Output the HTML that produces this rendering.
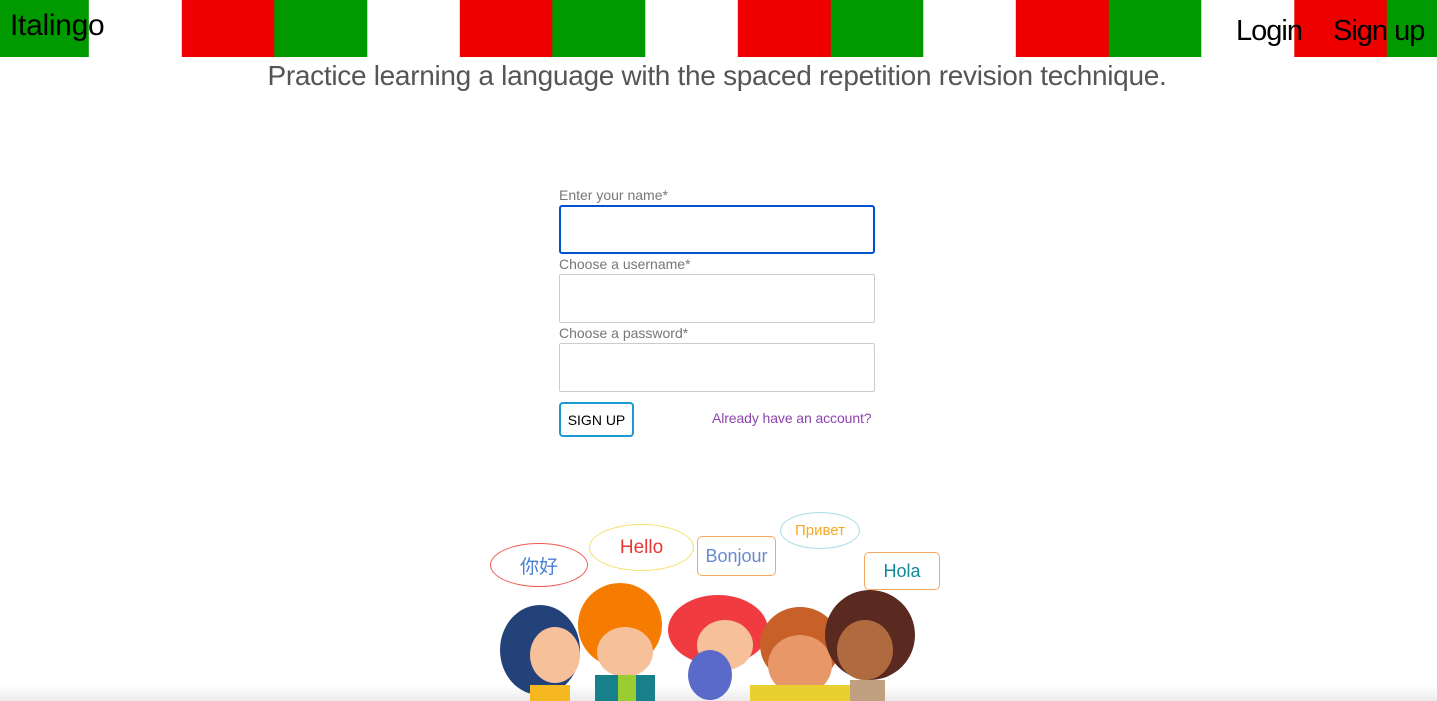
<!DOCTYPE html>
<html><head><meta charset="utf-8"><style>
body{margin:0;width:1437px;height:701px;overflow:hidden;background:#fff;font-family:"Liberation Sans",sans-serif;position:relative}
.hdr{position:absolute;left:0;top:0;width:1437px;height:57px;background:repeating-linear-gradient(90deg,#009900 0 92.7px,#fff 92.7px 185.4px,#ee0000 185.4px 278.1px);background-position:-3.7px 0}
.t{position:absolute;font-family:"Liberation Sans",sans-serif;color:#000}
.lbl{position:absolute;left:559px;font-size:14px;color:#777}
.inp{position:absolute;left:559px;height:49px;border:1px solid #ccc;border-radius:2px;box-sizing:border-box;width:316px}
.bub{position:absolute;background:#fff;display:flex;align-items:center;justify-content:center;font-size:19px}
</style></head><body>
<div class="hdr"></div>
<div class="t" style="left:10px;top:9px;font-size:30px;letter-spacing:-0.3px">Italingo</div>
<div class="t" style="left:1236px;top:15px;font-size:29px;letter-spacing:-1px">Login</div>
<div class="t" style="left:1333px;top:15px;font-size:29px;letter-spacing:-1px">Sign up</div>
<div class="t" style="left:0;width:1434px;text-align:center;top:60px;font-size:28px;color:#555;letter-spacing:-0.3px">Practice learning a language with the spaced repetition revision technique.</div>

<div class="lbl" style="top:187px">Enter your name*</div>
<div class="inp" style="top:205px;border:2px solid #0050d0;border-radius:3px"></div>
<div class="lbl" style="top:256px">Choose a username*</div>
<div class="inp" style="top:274px"></div>
<div class="lbl" style="top:325px">Choose a password*</div>
<div class="inp" style="top:343px"></div>
<div style="position:absolute;left:559px;top:402px;width:75px;height:35px;box-sizing:border-box;border:2px solid #1a9ad0;border-radius:4px;font-size:14px;display:flex;align-items:center;justify-content:center">SIGN UP</div>
<div style="position:absolute;left:712px;top:410px;font-size:14px;color:#8e44ad;letter-spacing:-0.1px">Already have an account?</div>

<div style="position:absolute;left:0;top:685px;width:1437px;height:16px;background:linear-gradient(#fff,#ebebeb)"></div>
<div class="bub" style="left:490px;top:543px;width:96px;height:42px;border:1.5px solid #f05a50;border-radius:50%;color:#4a80d0;font-family:'Noto Sans CJK SC',sans-serif">你好</div>
<div class="bub" style="left:589px;top:524px;width:103px;height:45px;border:1.5px solid #f5e070;border-radius:50%;color:#e53935">Hello</div>
<div class="bub" style="left:697px;top:536px;width:77px;height:38px;border:1.5px solid #f7a860;border-radius:5px;color:#6a8ad0;font-size:18px">Bonjour</div>
<div class="bub" style="left:780px;top:512px;width:78px;height:35px;border:1.5px solid #a8dce8;border-radius:50%;color:#f7a820;font-size:15px">Привет</div>
<div class="bub" style="left:864px;top:552px;width:74px;height:36px;border:1.5px solid #f7a860;border-radius:5px;color:#108a9a;font-size:18px">Hola</div>

<svg style="position:absolute;left:480px;top:580px" width="480" height="121">
<ellipse cx="60" cy="70" rx="40" ry="45" fill="#24427a"/><ellipse cx="75" cy="75" rx="25" ry="28" fill="#f5c09a"/><rect x="50" y="105" width="40" height="20" fill="#f5b820"/>
<ellipse cx="140" cy="45" rx="42" ry="42" fill="#f57c00"/><ellipse cx="145" cy="72" rx="28" ry="25" fill="#f5c09a"/><rect x="115" y="95" width="60" height="30" fill="#17808a"/><rect x="138" y="95" width="18" height="30" fill="#9acd32"/>
<ellipse cx="238" cy="50" rx="50" ry="35" fill="#f03c40"/><ellipse cx="245" cy="65" rx="28" ry="25" fill="#f5c09a"/><ellipse cx="230" cy="95" rx="22" ry="25" fill="#5a6ac8"/>
<ellipse cx="320" cy="65" rx="40" ry="38" fill="#c8602a"/><ellipse cx="320" cy="85" rx="32" ry="30" fill="#e89868"/><rect x="270" y="105" width="100" height="20" fill="#e8d030"/>
<ellipse cx="390" cy="55" rx="45" ry="45" fill="#5a2a20"/><ellipse cx="385" cy="70" rx="28" ry="30" fill="#b06a40"/><rect x="370" y="100" width="35" height="25" fill="#c0a080"/>
</svg>
</body></html>
